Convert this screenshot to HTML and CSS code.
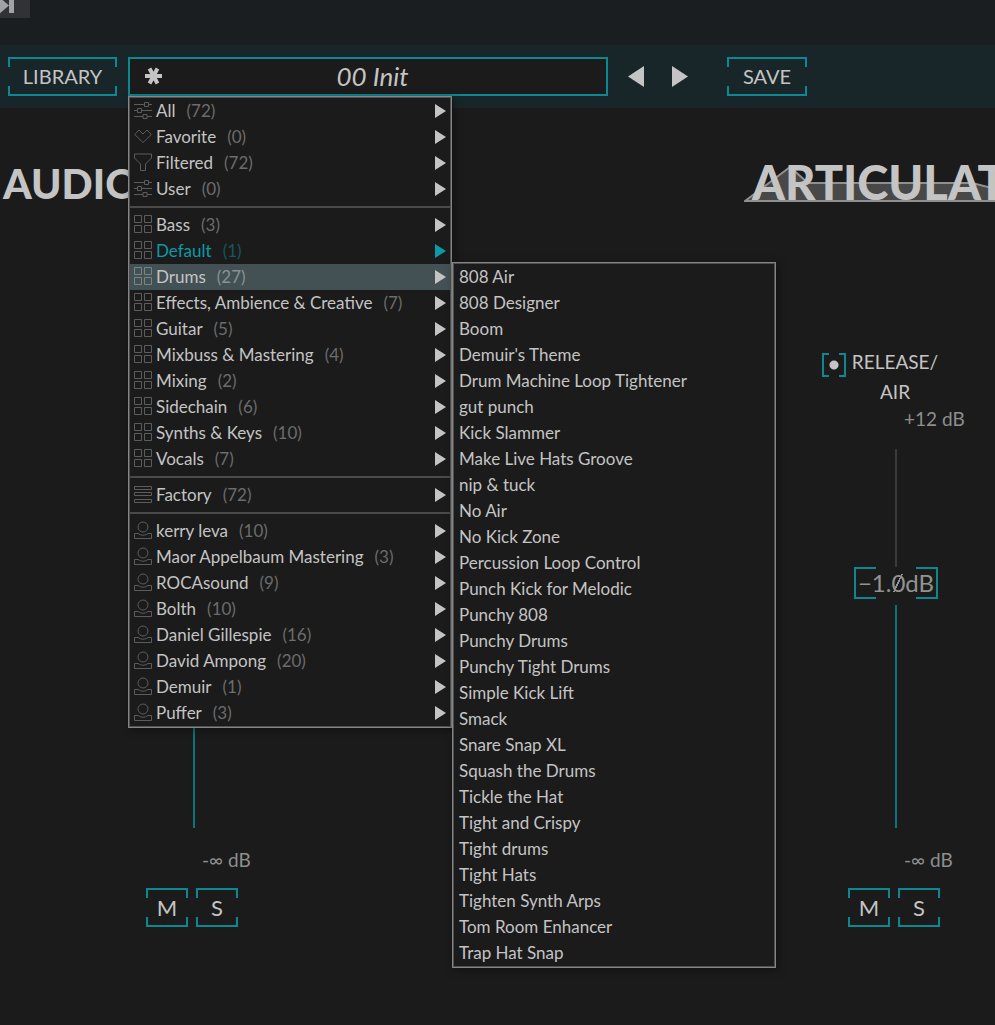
FILE: index.html
```html
<!DOCTYPE html>
<html lang="en">
<head>
<meta charset="utf-8">
<title>Preset browser</title>
<link rel="stylesheet" href="styles.css">
</head>
<body>
<svg class="defs" aria-hidden="true">
  <symbol id="sliders" viewBox="0 0 18 18"><path d="M0 3.5H10.500M14.500 3.5H18M0 9.5H3.5M7.5 9.5H18M0 15.5H9M13 15.5H18M10.5 1.5h4v4h-4zM3.500 7.5h4v4h-4zM9 13.5h4v4H9z"/></symbol>
  <symbol id="heart" viewBox="0 0 18 18"><path d="M.7 7.500 5 3 9 7 13 3 17.300 7.500 9 15.500Z"/></symbol>
  <symbol id="funnel" viewBox="0 0 18 18"><path d="M.5 1h17v4L11.500 11v6.500h-5V11L.5 5Z"/></symbol>
  <symbol id="grid" viewBox="0 0 18 18"><path d="M.5.5h7v7h-7zM10.500.5h7v7h-7zM.5 10.500h7v7h-7zM10.500 10.500h7v7h-7z"/></symbol>
  <symbol id="rows" viewBox="0 0 18 18"><path d="M.5 1.500h17v3H.5zM.5 7.500h17v3H.5zM.5 14.500h17v3H.5z"/></symbol>
  <symbol id="person" viewBox="0 0 18 18"><circle cx="9" cy="6" r="5"/><path d="M.5 12.500H4Q9 16 14 12.500h3.500v5H.5Z"/></symbol>
  <symbol id="next" viewBox="0 0 11 14"><path d="M0 0 11 7 0 14Z"/></symbol>
</svg>

<header class="transport">
  <button class="skip" aria-label="Skip to end"><svg width="30" height="18" viewBox="0 0 30 18"><path d="M-2-4 9 5.500-2 15ZM9-2h5v15H9z"/></svg></button>
</header>

<nav class="toolbar">
  <button class="bracket library">LIBRARY</button>
  <div class="preset">
    <button class="current"><svg class="star" width="18" height="18" viewBox="0 0 18 18"><path d="M0 9h17M4.500 1.500l8 15M12.500 1.500l-8 15"/></svg><span>00 Init</span></button>
    <ul class="menu">
      <li><button><svg class="icon"><use href="#sliders"/></svg>All<span class="count">(72)</span><svg class="arrow"><use href="#next"/></svg></button></li>
      <li><button><svg class="icon"><use href="#heart"/></svg>Favorite<span class="count">(0)</span><svg class="arrow"><use href="#next"/></svg></button></li>
      <li><button><svg class="icon"><use href="#funnel"/></svg>Filtered<span class="count">(72)</span><svg class="arrow"><use href="#next"/></svg></button></li>
      <li><button><svg class="icon"><use href="#sliders"/></svg>User<span class="count">(0)</span><svg class="arrow"><use href="#next"/></svg></button></li>
      <li class="divider"></li>
      <li><button><svg class="icon"><use href="#grid"/></svg>Bass<span class="count">(3)</span><svg class="arrow"><use href="#next"/></svg></button></li>
      <li><button class="active"><svg class="icon"><use href="#grid"/></svg>Default<span class="count">(1)</span><svg class="arrow"><use href="#next"/></svg></button></li>
      <li class="parent"><button class="open"><svg class="icon"><use href="#grid"/></svg>Drums<span class="count">(27)</span><svg class="arrow"><use href="#next"/></svg></button>
        <ul class="menu submenu">
          <li><button>808 Air</button></li>
          <li><button>808 Designer</button></li>
          <li><button>Boom</button></li>
          <li><button>Demuir's Theme</button></li>
          <li><button>Drum Machine Loop Tightener</button></li>
          <li><button>gut punch</button></li>
          <li><button>Kick Slammer</button></li>
          <li><button>Make Live Hats Groove</button></li>
          <li><button>nip &amp; tuck</button></li>
          <li><button>No Air</button></li>
          <li><button>No Kick Zone</button></li>
          <li><button>Percussion Loop Control</button></li>
          <li><button>Punch Kick for Melodic</button></li>
          <li><button>Punchy 808</button></li>
          <li><button>Punchy Drums</button></li>
          <li><button>Punchy Tight Drums</button></li>
          <li><button>Simple Kick Lift</button></li>
          <li><button>Smack</button></li>
          <li><button>Snare Snap XL</button></li>
          <li><button>Squash the Drums</button></li>
          <li><button>Tickle the Hat</button></li>
          <li><button>Tight and Crispy</button></li>
          <li><button>Tight drums</button></li>
          <li><button>Tight Hats</button></li>
          <li><button>Tighten Synth Arps</button></li>
          <li><button>Tom Room Enhancer</button></li>
          <li><button>Trap Hat Snap</button></li>
        </ul>
      </li>
      <li><button><svg class="icon"><use href="#grid"/></svg>Effects, Ambience &amp; Creative<span class="count">(7)</span><svg class="arrow"><use href="#next"/></svg></button></li>
      <li><button><svg class="icon"><use href="#grid"/></svg>Guitar<span class="count">(5)</span><svg class="arrow"><use href="#next"/></svg></button></li>
      <li><button><svg class="icon"><use href="#grid"/></svg>Mixbuss &amp; Mastering<span class="count">(4)</span><svg class="arrow"><use href="#next"/></svg></button></li>
      <li><button><svg class="icon"><use href="#grid"/></svg>Mixing<span class="count">(2)</span><svg class="arrow"><use href="#next"/></svg></button></li>
      <li><button><svg class="icon"><use href="#grid"/></svg>Sidechain<span class="count">(6)</span><svg class="arrow"><use href="#next"/></svg></button></li>
      <li><button><svg class="icon"><use href="#grid"/></svg>Synths &amp; Keys<span class="count">(10)</span><svg class="arrow"><use href="#next"/></svg></button></li>
      <li><button><svg class="icon"><use href="#grid"/></svg>Vocals<span class="count">(7)</span><svg class="arrow"><use href="#next"/></svg></button></li>
      <li class="divider"></li>
      <li><button><svg class="icon"><use href="#rows"/></svg>Factory<span class="count">(72)</span><svg class="arrow"><use href="#next"/></svg></button></li>
      <li class="divider"></li>
      <li><button><svg class="icon"><use href="#person"/></svg>kerry leva<span class="count">(10)</span><svg class="arrow"><use href="#next"/></svg></button></li>
      <li><button><svg class="icon"><use href="#person"/></svg>Maor Appelbaum Mastering<span class="count">(3)</span><svg class="arrow"><use href="#next"/></svg></button></li>
      <li><button><svg class="icon"><use href="#person"/></svg>ROCAsound<span class="count">(9)</span><svg class="arrow"><use href="#next"/></svg></button></li>
      <li><button><svg class="icon"><use href="#person"/></svg>Bolth<span class="count">(10)</span><svg class="arrow"><use href="#next"/></svg></button></li>
      <li><button><svg class="icon"><use href="#person"/></svg>Daniel Gillespie<span class="count">(16)</span><svg class="arrow"><use href="#next"/></svg></button></li>
      <li><button><svg class="icon"><use href="#person"/></svg>David Ampong<span class="count">(20)</span><svg class="arrow"><use href="#next"/></svg></button></li>
      <li><button><svg class="icon"><use href="#person"/></svg>Demuir<span class="count">(1)</span><svg class="arrow"><use href="#next"/></svg></button></li>
      <li><button><svg class="icon"><use href="#person"/></svg>Puffer<span class="count">(3)</span><svg class="arrow"><use href="#next"/></svg></button></li>
    </ul>
  </div>
  <div class="steps">
    <button aria-label="Previous preset"><svg width="16" height="22" viewBox="0 0 16 22"><path d="M16 0V21L0 10.500Z"/></svg></button>
    <button aria-label="Next preset"><svg width="16" height="22" viewBox="0 0 16 22"><path d="M0 0V21L16 10.500Z"/></svg></button>
  </div>
  <button class="bracket save">SAVE</button>
</nav>

<main>
  <div class="titles">
    <h2>AUDIO</h2>
    <div class="articulation">
      <svg class="envelope" width="330" height="40" viewBox="0 0 330 40"><path d="M1 36 46 2 64 18H228L300 36Z"/></svg>
      <h2>ARTICULAT</h2>
    </div>
  </div>
  <div class="channels">
    <section class="channel">
      <div class="track filled"></div>
      <span class="scale floor">-∞ dB</span>
      <div class="pair"><button class="bracket">M</button><button class="bracket">S</button></div>
    </section>
    <section class="channel">
      <label class="enable"><input type="radio" checked><span>RELEASE/<br>AIR</span></label>
      <span class="scale">+12 dB</span>
      <div class="fader">
        <div class="track upper"></div>
        <output class="value">−1.<span class="zero">0</span>dB</output>
        <div class="track filled"></div>
      </div>
      <span class="scale floor">-∞ dB</span>
      <div class="pair"><button class="bracket">M</button><button class="bracket">S</button></div>
    </section>
  </div>
</main>
</body>
</html>
```

FILE: styles.css
```css
:root {
  --teal: #0d8791;
  --bg: #1b1b1b;
  --text: #c4c4c4;
}

* { box-sizing: border-box; }

body {
  margin: 0;
  min-height: 100vh;
  overflow-x: hidden;
  background: var(--bg);
  color: var(--text);
  font-family: Lato, "Liberation Sans", sans-serif;
  font-size: 17px;
}

button {
  margin: 0;
  padding: 0;
  border: 0;
  background: none;
  color: inherit;
  font: inherit;
}

svg { display: block; fill: var(--text); }
.defs { position: absolute; width: 0; height: 0; }

.transport { height: 45px; background: #1b1e21; }
.skip { display: block; background: #303236; }
.skip svg { fill: #a0a2a5; }

.toolbar {
  display: flex;
  align-items: center;
  height: 63px;
  padding: 0 8px;
  background: #192629;
}

.bracket {
  height: 39px;
  padding-bottom: 2px;
  border: solid var(--teal);
  border-width: 2px 0;
  background:
    linear-gradient(var(--teal) 8px, transparent 8px calc(100% - 8px), var(--teal) 0) left / 2px 100% no-repeat,
    linear-gradient(var(--teal) 8px, transparent 8px calc(100% - 8px), var(--teal) 0) right / 2px 100% no-repeat;
  font-size: 20px;
}
.library { width: 109px; }
.save { width: 80px; }

.preset { position: relative; width: 480px; margin-left: 11px; }

.current {
  display: flex;
  align-items: center;
  width: 100%;
  height: 39px;
  padding: 0 24px 2px 15px;
  border: 2px solid var(--teal);
  background: var(--bg);
  font-size: 26px;
  font-style: italic;
}
.current span { flex: 1; text-align: center; }
.star { fill: none; stroke: var(--text); stroke-width: 4; }

.steps { display: flex; gap: 28px; margin: 0 39px 0 20px; }

.menu {
  position: absolute;
  z-index: 2;
  top: 100%;
  left: 0;
  width: 324px;
  margin: 0;
  padding: 1px;
  border: 1px solid #858585;
  background: var(--bg);
  box-shadow: inset 0 0 0 1px #505050, 2px 2px 8px #0006;
  list-style: none;
}
.menu button {
  display: flex;
  align-items: center;
  width: 100%;
  height: 26px;
  padding: 0 4px 2px 4px;
  white-space: nowrap;
}
.menu .open { background: #435154; }
.menu .active { color: #0c9aa6; }
.active .count { color: #15575c; }
.menu .active .arrow { fill: #0c9aa6; }
.parent { position: relative; }
.menu .submenu { top: -2px; left: calc(100% + 2px); }
.submenu button { padding-left: 5px; }
.divider { height: 10px; padding-top: 4px; }
.divider::before { content: ""; display: block; height: 2px; background: #4a4a4a; }

.icon {
  width: 18px;
  height: 18px;
  margin-right: 4px;
  fill: none;
  stroke: #5c5c5c;
}
.open .icon { stroke: #74868a; }
.count { margin-left: 11px; color: #6c6c6c; }
.open .count { color: #889294; }
.arrow { width: 11px; height: 14px; margin: 2px 0 0 auto; }

.titles { display: flex; justify-content: space-between; padding: 52px 0 0 3px; }
h2 { margin: 0; font-size: 41px; line-height: 48px; font-weight: 900; }
.articulation { position: relative; width: 251px; overflow: hidden; white-space: nowrap; }
.articulation h2 { position: relative; padding-left: 8px; font-size: 47px; line-height: 44px; }
.envelope { position: absolute; top: 5px; left: 0; fill: #484848; stroke: #909090; stroke-width: 2; }

.channels {
  display: flex;
  justify-content: space-between;
  align-items: flex-end;
  padding: 139px 0 0 92px;
}
.channel { display: flex; flex-direction: column; width: 201px; }

.enable {
  display: flex;
  justify-content: center;
  gap: 6px;
  padding-right: 29px;
  font-size: 19px;
  line-height: 30px;
  text-align: center;
}
.enable input {
  appearance: none;
  width: 24px;
  height: 24px;
  margin: 6px 0 0;
  background:
    radial-gradient(circle, var(--text) 4px, transparent 5px),
    linear-gradient(90deg, var(--teal) 5px, transparent 5px calc(100% - 5px), var(--teal) 0) top / 100% 2px no-repeat,
    linear-gradient(90deg, var(--teal) 5px, transparent 5px calc(100% - 5px), var(--teal) 0) bottom / 100% 2px no-repeat;
  border: solid var(--teal);
  border-width: 0 2px;
}

.scale { margin-left: 110px; color: #8e8e8e; font-size: 19px; line-height: 24px; }
.floor { margin-top: 20px; }

.fader { padding-top: 18px; }
.track { width: 2px; margin-left: 101px; }
.upper { height: 118px; background: #3a3a3a; }
.filled { height: 223px; background: #0c737b; }

.value {
  display: block;
  width: 84px;
  margin: 0 auto 6px 60px;
  border: solid var(--teal);
  border-width: 0 2px;
  background:
    linear-gradient(90deg, var(--teal) 20px, transparent 20px calc(100% - 20px), var(--teal) 0) top / 100% 2px no-repeat,
    linear-gradient(90deg, var(--teal) 20px, transparent 20px calc(100% - 20px), var(--teal) 0) bottom / 100% 2px no-repeat;
  color: #929292;
  font-size: 24px;
  line-height: 32px;
  text-align: center;
}
.zero { background: linear-gradient(115deg, transparent 46%, #929292 46% 54%, transparent 54%) center / 100% 18px no-repeat; }

.pair { display: flex; gap: 8px; margin: 16px 0 0 54px; }
.pair .bracket { width: 42px; padding-bottom: 0; font-size: 22px; }
```
